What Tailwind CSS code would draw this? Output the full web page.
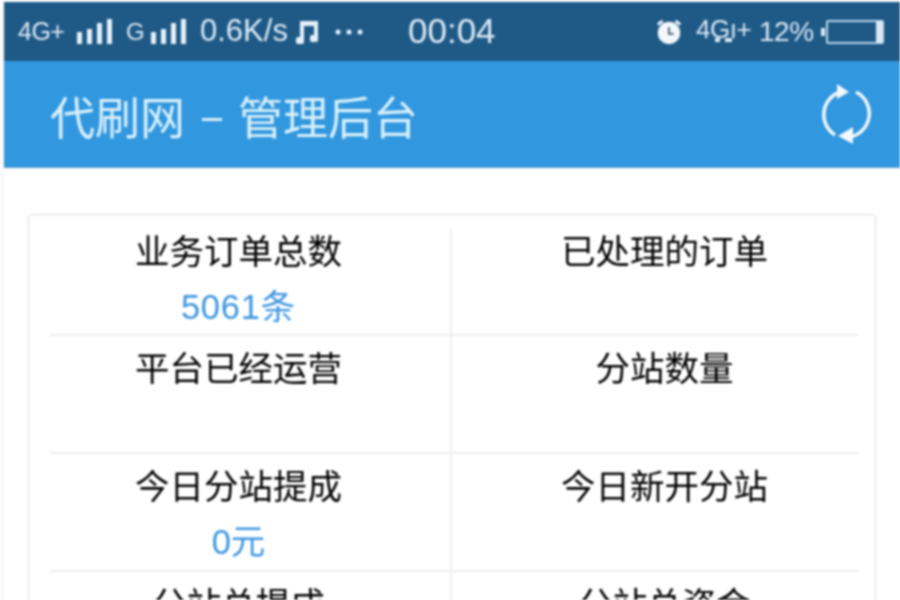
<!DOCTYPE html>
<html lang="zh-CN">
<head>
    <meta charset="UTF-8">
    <title>代刷网 - 管理后台</title>
    <script src="https://cdn.jsdelivr.net/npm/@tailwindcss/browser@4"></script>
</head>
<body class="bg-white overflow-hidden">
<div class="w-[900px] h-[600px] overflow-hidden pt-[2px] pl-[4px] bg-[#f8f9fc] font-['Liberation_Sans','Noto_Sans_CJK_SC',sans-serif] blur-[0.8px]">
    <!-- 状态栏 -->
    <div class="h-[59px] bg-[#1f5a87] flex items-center text-[#dbe9f5] whitespace-nowrap">
        <span class="ml-[14px] w-[48px] text-[25px] tracking-[-0.5px]">4G+</span>
        <svg class="ml-[11px]" width="36" height="26" viewBox="0 0 36 26" fill="#e6f0f8"><rect x="0" y="13" width="5" height="12"/><rect x="10" y="10" width="5" height="15"/><rect x="20" y="4" width="5" height="21"/><rect x="30" y="0" width="5" height="25"/></svg>
        <span class="ml-[13px] w-[19px] text-[24px]">G</span>
        <svg class="ml-[6px]" width="36" height="26" viewBox="0 0 36 26" fill="#e6f0f8"><rect x="0" y="13" width="5" height="12"/><rect x="10" y="10" width="5" height="15"/><rect x="20" y="4" width="5" height="21"/><rect x="30" y="0" width="5" height="25"/></svg>
        <span class="ml-[13px] w-[88px] text-[31px]">0.6K/s</span>
        <svg class="ml-[8px]" width="22" height="26" viewBox="0 0 22 26" fill="#e6f0f8"><path d="M4 2h18v18h-4V7H8v15H4z"/><rect x="0" y="18" width="8" height="7" rx="2"/><rect x="14" y="16" width="8" height="7" rx="2"/></svg>
        <svg class="ml-[17px]" width="28" height="8" viewBox="0 0 28 8" fill="#e6f0f8"><circle cx="3" cy="4" r="2.5"/><circle cx="14" cy="4" r="2.5"/><circle cx="25" cy="4" r="2.5"/></svg>
        <span class="ml-[45px] w-[87px] text-[35px]">00:04</span>
        <svg class="ml-[160px]" width="28" height="28" viewBox="0 0 30 30"><circle cx="15" cy="16" r="12" fill="#f2f7fb"/><path d="M3 7l5-4M27 7l-5-4" stroke="#f2f7fb" stroke-width="3"/><path d="M15 10v7h5" stroke="#4a5a68" stroke-width="2" fill="none"/></svg>
        <span class="relative ml-[13px] w-[55px] text-[26px] tracking-[-0.5px] -translate-y-[2px]">4Gı+
            <svg class="absolute left-[19px] top-[27px]" width="18" height="6" viewBox="0 0 18 6" fill="#dbe9f5"><rect x="0" y="1" width="5" height="4"/><rect x="10" y="1" width="7" height="4"/></svg>
        </span>
        <span class="ml-[8px] w-[54px] text-[28px] tracking-[-0.5px]">12%</span>
        <svg class="ml-[8px]" width="66" height="30" viewBox="0 0 66 30" fill="none"><rect x="0" y="11" width="4" height="8" fill="#dbe9f5"/><rect x="6" y="4" width="56" height="22" rx="1" stroke="#b9d2e6" stroke-width="2"/><rect x="55" y="4" width="7" height="22" fill="#dbe9f5"/></svg>
    </div>
    <!-- 顶栏 -->
    <div class="h-[107px] bg-[#3197df] flex items-center justify-between pl-[46px] pr-[29px] border-b border-[#5a9ccb]">
        <h1 class="pt-[11px] text-[45px] font-normal text-[#d8f0fb] leading-none whitespace-nowrap flex items-center">代刷网<span class="w-[20px] h-[3px] bg-[#d8f0fb] ml-[17px] mr-[16px]"></span>管理后台</h1>
        <svg width="52" height="64" viewBox="0 0 52 64" fill="none" stroke="#f2f8fd" stroke-width="3.5">
            <path d="M21 10A24 24 0 0 0 16 53"/>
            <path d="M37 10A24 24 0 0 1 31 55"/>
            <path d="M18 2l12 8-12 7z" fill="#f2f8fd" stroke="none"/>
            <path d="M34 45l-15 9 15 8z" fill="#f2f8fd" stroke="none"/>
        </svg>
    </div>
    <!-- 统计面板 -->
    <div class="h-[432px] bg-white pt-[46px] pl-[24px] pr-[24px]">
        <div class="border border-[#dddddd] rounded-[4px] pt-[15px] px-[21px] h-[500px]">
            <div class="grid grid-cols-[402px_406px] text-center text-[34.5px] text-[#000000] leading-[40px]">
                <div class="h-[104px] border-r-2 border-[#eeeeee] pt-[2px] pr-[23px]">业务订单总数<div class="mt-[15px] text-[#3f97e0] tracking-[0.8px]">5061条</div></div>
                <div class="h-[104px] pt-[2px] pl-[19px]">已处理的订单</div>
                <div class="col-span-2 h-[2px] bg-[#eeeeee]"></div>
                <div class="h-[116px] border-r-2 border-[#eeeeee] pt-[13px] pr-[23px]">平台已经运营</div>
                <div class="h-[116px] pt-[13px] pl-[19px]">分站数量</div>
                <div class="col-span-2 h-[2px] bg-[#eeeeee]"></div>
                <div class="h-[116px] border-r-2 border-[#eeeeee] pt-[13px] pr-[23px]">今日分站提成<div class="mt-[15px] text-[#3f97e0]">0元</div></div>
                <div class="h-[116px] pt-[13px] pl-[19px]">今日新开分站</div>
                <div class="col-span-2 h-[2px] bg-[#eeeeee]"></div>
                <div class="h-[116px] border-r-2 border-[#eeeeee] pt-[13px] pr-[23px]">分站总提成</div>
                <div class="h-[116px] pt-[13px] pl-[19px]">分站总资金</div>
            </div>
        </div>
    </div>
</div>
</body>
</html>
